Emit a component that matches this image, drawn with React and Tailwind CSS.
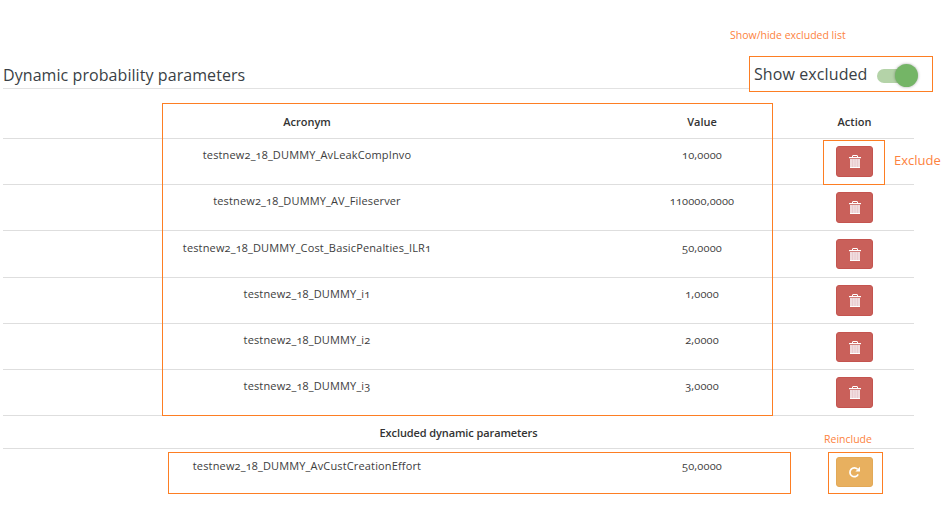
import React from 'react';

const ORANGE = 'border-[#fd7e23]';
const COLS = 'grid grid-cols-[608px_182px_121px]';

const rows = [
  { name: 'testnew2_18_DUMMY_AvLeakCompInvo', value: '10,0000', h: 'h-[46px]', pt: 'pt-[9px]', btn: 'mt-[7px] h-[31px]' },
  { name: 'testnew2_18_DUMMY_AV_Fileserver', value: '110000,0000', h: 'h-[46px]', pt: 'pt-[9px]', btn: 'mt-[7px] h-[31px]' },
  { name: 'testnew2_18_DUMMY_Cost_BasicPenalties_ILR1', value: '50,0000', h: 'h-[47px]', pt: 'pt-[10px]', btn: 'mt-[8px] h-[30px]' },
  { name: 'testnew2_18_DUMMY_i1', value: '1,0000', h: 'h-[46px]', pt: 'pt-[9px]', btn: 'mt-[7px] h-[31px]' },
  { name: 'testnew2_18_DUMMY_i2', value: '2,0000', h: 'h-[46px]', pt: 'pt-[9px]', btn: 'mt-[8px] h-[30px]' },
  { name: 'testnew2_18_DUMMY_i3', value: '3,0000', h: 'h-[46px]', pt: 'pt-[9px]', btn: 'mt-[7px] h-[31px]' },
];

function TrashIcon() {
  return (
    <svg width="12" height="13" viewBox="0 0 12 13">
      <path d="M3.5 2 V1 Q3.5 .5 4 .5 H8 Q8.500 .5 8.500 1 V2" fill="none" stroke="#fff" />
      <rect x="0" y="2" width="12" height="1.200" fill="#fff" />
      <rect x="1" y="4" width="10" height="9" fill="#f0dcde" />
      <path d="M3.500 4 V12 M6 4 V12 M8.500 4 V12" stroke="#e6c6cb" strokeWidth=".8" />
      <rect x="1" y="12" width="10" height="1" fill="#fff" />
    </svg>
  );
}

function RedoIcon() {
  return (
    <svg width="13" height="13" viewBox="0 0 13 13" fill="none">
      <path d="M10.2 8.4 A4.4 4.4 0 1 1 9.600 3.300" stroke="#fff" strokeWidth="1.7" />
      <path d="M12 .8 V5.400 H7.400 Z" fill="#fff" />
    </svg>
  );
}

export default function App() {
  return (
    <div className="relative w-[943px] h-[516px] bg-white overflow-hidden pl-[3px] pt-[65px] font-['Open_Sans','Lato',sans-serif] oldstyle-nums text-[#333]">
      <div className="w-[911px] h-[24px] border-b border-[#e2e2e2] text-[16px] leading-[21px] text-[#3a3f45] tracking-[.07px]">
        Dynamic probability parameters
      </div>

      <div className="mt-[49px] w-[911px]">
        <div className="h-[1px] bg-[#dedede]" />
        <div className={`absolute top-[115px] left-[3px] w-[911px] ${COLS} text-[11px] leading-[14px] font-semibold text-center text-[#333]`}>
          <div>Acronym</div>
          <div>Value</div>
          <div className="pl-[2px]">Action</div>
        </div>

        {rows.map(r => (
          <div key={r.name} className={`${COLS} ${r.h} border-b border-[#dedede] text-center text-[11px] leading-[14px] text-[#3d3d3d] tracking-[.15px]`}>
            <div className={r.pt}>{r.name}</div>
            <div className={r.pt}>{r.value}</div>
            <div className="pl-[2px] flex justify-center items-start">
              <button className={`${r.btn} w-[37px] bg-[#c9605a] border border-[#c4544f] rounded-[3px] flex items-center justify-center`}>
                <TrashIcon />
              </button>
            </div>
          </div>
        ))}

        <div className="h-[33px] border-b border-[#dedede] text-center text-[11px] leading-[14px] font-semibold pt-[10px] text-[#333] tracking-[-.1px]">
          Excluded dynamic parameters
        </div>
        <div className={`${COLS} text-center text-[11px] leading-[14px] text-[#3d3d3d] tracking-[.15px]`}>
          <div className="pt-[10px]">testnew2_18_DUMMY_AvCustCreationEffort</div>
          <div className="pt-[10px]">50,0000</div>
          <div className="pt-[8px] pl-[2px] flex justify-center">
            <button className="w-[37px] h-[30px] bg-[#e8b05f] border border-[#e3a957] rounded-[3px] flex items-center justify-center">
              <RedoIcon />
            </button>
          </div>
        </div>
      </div>

      {/* annotations on top of the screen */}
      <div className="absolute left-[730px] top-[28px] text-[10.5px] leading-[14px] text-[#fd8240]">Show/hide excluded list</div>
      <div className={`absolute left-[749px] top-[56px] w-[184px] h-[36px] border ${ORANGE} bg-white flex items-center pl-[4px]`}>
        <span className="mt-[1px] text-[16px] leading-[21px] text-[#3a3f45] tracking-[.1px]">Show excluded</span>
        <div className="relative mt-[4px] ml-[9px] w-[38px] h-[14px] rounded-full bg-[#b4d3a8]">
          <div className="absolute right-[-3px] top-[-5px] w-[23px] h-[23px] rounded-full bg-[#74b566] shadow-[0_0_3px_rgba(0,0,0,.35)]" />
        </div>
      </div>
      <div className={`absolute left-[162px] top-[103px] w-[611px] h-[313px] border ${ORANGE}`} />
      <div className={`absolute left-[823px] top-[140px] w-[62px] h-[45px] border ${ORANGE}`} />
      <div className="absolute left-[894px] top-[152px] text-[13px] leading-[16px] text-[#fd8240]">Exclude</div>
      <div className="absolute left-[824px] top-[432px] text-[10.5px] leading-[14px] text-[#fd8240]">Reinclude</div>
      <div className={`absolute left-[168px] top-[452px] w-[623px] h-[42px] border ${ORANGE}`} />
      <div className={`absolute left-[828px] top-[452px] w-[55px] h-[42px] border ${ORANGE}`} />
    </div>
  );
}
